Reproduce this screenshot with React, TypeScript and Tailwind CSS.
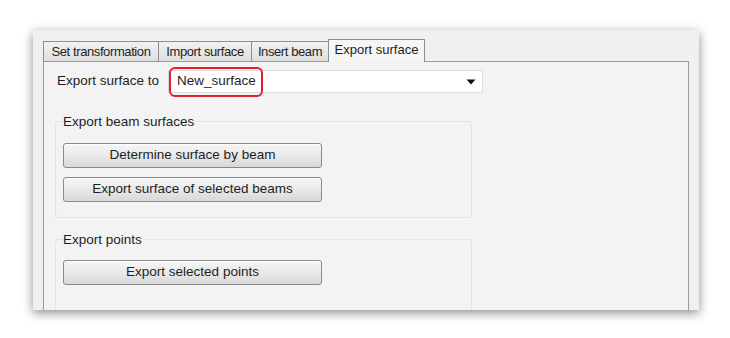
const tabs = [
  { label: "Set transformation", w: "w-[116px]" },
  { label: "Import surface", w: "w-[94px]" },
  { label: "Insert beam", w: "w-[78px]" },
];

const font = { fontFamily: '"Liberation Sans", Arial, sans-serif' };

function WinButton({ label }: { label: string }) {
  return (
    <button
      type="button"
      className="block w-[259px] h-[25px] rounded-[3px] border border-[#8a8a8a] bg-gradient-to-b from-[#f6f6f6] via-[#e9e9e9] to-[#d8d8d8] text-[13.5px] text-[#1e1e1e] shadow-[inset_0_1px_0_#ffffff]"
    >
      {label}
    </button>
  );
}

function GroupBox({ title, children, className }: { title: string; children: React.ReactNode; className?: string }) {
  return (
    <fieldset
      className={
        "w-[417px] rounded-[3px] border border-[#e0e5ea] px-[7px] " + (className ?? "")
      }
    >
      <legend className="px-0 text-[13.5px] leading-[15px] text-[#1e1e1e]">{title}</legend>
      {children}
    </fieldset>
  );
}

export default function App() {
  return (
    <div className="min-h-screen bg-white pt-[30px] pl-[33px]" style={font}>
      <div className="w-[666px] h-[280px] overflow-hidden bg-[#f0f0f0] pt-[8px] px-[10px] shadow-[0_3px_10px_rgba(0,0,0,0.45)]">
        {/* tab strip */}
        <div className="flex items-end h-[23px] relative z-10">
          {tabs.map((t) => (
            <div
              key={t.label}
              className={
                t.w +
                " h-[20px] -mr-px flex items-center justify-center border border-b-0 border-[#8c8e94] bg-gradient-to-b from-[#f2f2f2] to-[#dfdfdf] text-[13px] tracking-[-0.4px] text-[#1e1e1e] whitespace-nowrap"
              }
            >
              {t.label}
            </div>
          ))}
          <div className="w-[97px] h-[23px] -mb-px flex items-center justify-center pb-[2px] border border-b-0 border-[#8c8e94] bg-[#f6f6f6] text-[13px] text-[#1e1e1e] whitespace-nowrap">
            Export surface
          </div>
        </div>

        {/* tab page */}
        <div className="h-[260px] border border-[#9a9a9a] bg-[#f3f3f3] pt-[8px] pl-[13px]">
          <div className="flex items-center">
            <span className="w-[111px] text-[13.5px] text-[#1e1e1e]">Export surface to</span>
            <div className="relative w-[315px] h-[23px] flex items-center justify-between bg-white border border-[#dcdcdc] pl-[8px] pr-[5px]">
              <span className="text-[13.5px] text-[#1e1e1e]">New_surface</span>
              <svg width="10" height="6" viewBox="0 0 10 6" className="mr-[1px]">
                <path d="M0.5 0.5 H9.5 L5 5.5 Z" fill="#111" />
              </svg>
              <div className="absolute left-[0px] top-[-4px] w-[94px] h-[30px] rounded-[6px] border-2 border-[#e0202a]" />
            </div>
          </div>

          <GroupBox title="Export beam surfaces" className="ml-[-2px] mt-[21px] pt-[14px] pb-[15px]">
            <div className="flex flex-col gap-[9px]">
              <WinButton label="Determine surface by beam" />
              <WinButton label="Export surface of selected beams" />
            </div>
          </GroupBox>

          <GroupBox title="Export points" className="ml-[-2px] mt-[14px] pt-[13px] h-[120px]">
            <WinButton label="Export selected points" />
          </GroupBox>
        </div>
      </div>
    </div>
  );
}
